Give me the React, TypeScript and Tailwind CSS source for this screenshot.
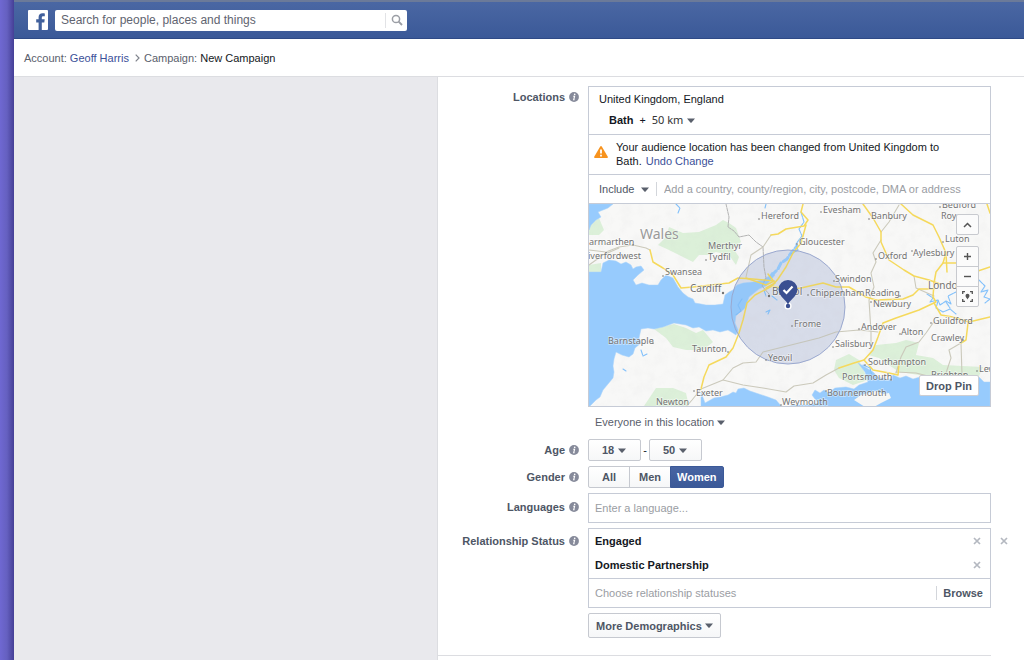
import { useState } from 'react';

interface MapLabel {
    name: string;
    x: number;
    y: number;
    size?: number;
    color?: string;
    dot?: [number, number];
}

const mapLabels: MapLabel[] = [
    { name: 'Wales', x: 52, y: 35, size: 14, color: '#999' },
    { name: 'Hereford', x: 173, y: 15, dot: [171, 15] },
    { name: 'Evesham', x: 235, y: 9, dot: [233, 8] },
    { name: 'Banbury', x: 283, y: 15, dot: [281, 15] },
    { name: 'Bedford', x: 354, y: 4, dot: [352, 3] },
    { name: 'Roy', x: 353, y: 15 },
    { name: 'Luton', x: 357, y: 38, dot: [355, 38] },
    { name: 'Gloucester', x: 211, y: 41, dot: [209, 40] },
    { name: 'Oxford', x: 290, y: 55, dot: [288, 55] },
    { name: 'Aylesbury', x: 325, y: 52, dot: [324, 47] },
    { name: 'armarthen', x: 1, y: 41, dot: [45, 41] },
    { name: 'iverfordwest', x: 0, y: 55 },
    { name: 'Merthyr', x: 120, y: 45 },
    { name: 'Tydfil', x: 120, y: 56, dot: [118, 56] },
    { name: 'Swansea', x: 77, y: 71, dot: [75, 72] },
    { name: 'Cardiff', x: 102, y: 88, size: 10, dot: [135, 89] },
    { name: 'Bristol', x: 184, y: 91, size: 10, dot: [181, 92] },
    { name: 'Swindon', x: 247, y: 78, dot: [246, 77] },
    { name: 'Chippenham', x: 222, y: 92, dot: [220, 91] },
    { name: 'Reading', x: 277, y: 92, dot: [312, 92] },
    { name: 'Newbury', x: 285, y: 103, dot: [283, 98] },
    { name: 'London', x: 340, y: 85, size: 10 },
    { name: 'Frome', x: 206, y: 123, dot: [204, 122] },
    { name: 'Andover', x: 273, y: 126, dot: [271, 125] },
    { name: 'Alton', x: 313, y: 131, dot: [312, 130] },
    { name: 'Guildford', x: 345, y: 120, dot: [343, 119] },
    { name: 'Crawley', x: 343, y: 137, dot: [375, 136] },
    { name: 'Salisbury', x: 247, y: 143, dot: [245, 143] },
    { name: 'Southampton', x: 280, y: 161, dot: [277, 161] },
    { name: 'Portsmouth', x: 254, y: 176, dot: [303, 176] },
    { name: 'Brighton', x: 343, y: 174 },
    { name: 'Bournemouth', x: 239, y: 192, dot: [238, 187] },
    { name: 'Weymouth', x: 194, y: 201, dot: [193, 201] },
    { name: 'Lewes', x: 391, y: 168, dot: [389, 167] },
    { name: 'Barnstaple', x: 20, y: 140, dot: [65, 139] },
    { name: 'Taunton', x: 104, y: 148, dot: [140, 148] },
    { name: 'Yeovil', x: 180, y: 157, dot: [178, 156] },
    { name: 'Exeter', x: 108, y: 192, dot: [106, 187] },
    { name: 'Newton', x: 68, y: 201 },
];

const majorRoads = [
    'M62 46L65 58L75 64L85 71L93 84L105 83L141 79L150 74L165 75L186 77',
    'M158 74L178 81L186 77M180 70L187 79L178 84',
    'M218 21L213 39L205 49L198 63L190 75L184 82L167 91L159 99L155 116L151 129L145 144L138 153L121 161L116 173L113 185',
    'M183 31L190 30L198 25L216 22L220 16L213 8L215 0',
    'M275 0L285 14L293 28L293 38L301 56L316 66L326 72L341 76L352 80',
    'M313 0L325 11L345 21L351 33L358 49L355 59L348 68L346 79',
    'M358 49L359 68M355 59L375 59L384 69L402 63',
    'M399 0L402 9',
    'M184 82L200 86L213 84L235 79L248 83L261 83L278 93L288 96L315 95L325 91L331 85L346 85',
    'M346 79L345 93L348 98L331 106L308 114L295 119L290 133L285 146L276 156L266 159L251 164',
    'M276 156L285 166L301 169L310 171M310 171L311 160',
    'M346 99L353 111L365 113L381 118L402 113',
    'M380 119L378 136L373 139',
];

const minorRoads = [
    'M1 46L18 48L31 43L45 41L58 44L62 46',
    'M1 61L15 51L31 44',
    'M158 73L163 51L175 43L183 31',
    'M311 1L301 18L293 28',
    'M293 36L285 49L288 58L283 69L286 83L281 96L283 128L283 140',
    'M113 185L135 176L145 164L155 159L168 158L175 148L191 144L215 138L231 134L248 128L271 126L290 128',
    'M135 176L155 181L175 184L198 188L206 182L225 179L238 171L251 164',
    'M345 119L338 129L331 138L318 143L313 153L308 169',
    'M373 139L361 146L363 154L358 169',
    'M373 139L374 171M308 168L328 169L348 174',
    'M113 185L104 196L98 203',
    'M326 72L328 84L346 92',
];

const rivers = [
    'M213 8L216 18L211 25L214 32L208 40L210 46L203 50',
    'M88 0L92 4L90 9M178 0L177 4',
    'M339 90L345 94L342 98L350 96L352 101L358 97L363 100L360 92L368 88L372 94L378 91',
    'M350 97L348 104L355 108L362 105L368 110M358 98L362 104',
    'M391 76L397 82L393 88L400 86L396 93L402 95L397 99',
    'M275 161L282 164L284 172M53 146L55 152L59 150',
    'M178 108L182 106L180 110M35 165L38 167',
    'M154 95L150 101L153 107L148 111M176 86L178 92M184 92L189 96',
];

function Caret() {
    return (
        <svg width="8" height="5" viewBox="0 0 8 5" className="pointer-events-none shrink-0 fill-[#5a606c]" aria-hidden="true">
            <path d="M0 0.5h8L4.6 4.4q-.6.6-1.2 0z" />
        </svg>
    );
}

function Cross() {
    return (
        <svg width="8" height="8" viewBox="0 0 8 8" className="stroke-[#b4b8c0]" aria-hidden="true">
            <path d="M1 1l6 6M7 1l-6 6" strokeWidth="1.7" />
        </svg>
    );
}

function InfoIcon() {
    return (
        <svg width="10" height="10" viewBox="0 0 10 10" className="shrink-0" aria-hidden="true">
            <circle cx="5" cy="5" r="4.9" fill="#868a9a" />
            <path d="M4.2 4.2h1.4L4.7 7.8h.9" fill="none" stroke="#fff" strokeWidth="1.1" />
            <circle cx="5.7" cy="2.4" r=".8" fill="#fff" />
        </svg>
    );
}

interface RowLabelProps {
    text: string;
    htmlFor?: string;
    className?: string;
}

function RowLabel({ text, htmlFor, className = '' }: RowLabelProps) {
    return (
        <div className={`flex w-[150px] shrink-0 items-start justify-end pr-[9px] ${className}`}>
            <label htmlFor={htmlFor} className="flex items-center gap-1 text-[11px] leading-[14px] font-bold text-[#4e5665]">
                {text}
                <InfoIcon />
            </label>
        </div>
    );
}

interface AgeSelectProps {
    id: string;
    label: string;
    value: number;
    onChange: (value: number) => void;
}

function AgeSelect({ id, label, value, onChange }: AgeSelectProps) {
    const ages = Array.from({ length: 53 }, (_, i) => i + 13);

    return (
        <div className="flex h-[22px] w-[53px] items-center rounded-xs border border-[#c6c9d0] bg-linear-to-b from-white to-[#f6f7f8] pl-[13px]">
            <select
                id={id}
                aria-label={label}
                value={value}
                onChange={(e) => onChange(Number(e.target.value))}
                className="w-4 appearance-none bg-transparent text-[11px] leading-[14px] font-bold text-[#4e5665] outline-none"
            >
                {ages.map((age) => <option key={age} value={age}>{age}</option>)}
            </select>
            <Caret />
        </div>
    );
}

function Header() {
    return (
        <header className="flex h-[39px] items-center gap-[7px] border-t-2 border-b border-t-[#6b7a99] border-b-[#2f4a86] bg-linear-to-b from-[#4a67a3] to-[#3b5998] pl-[14px]">
            <a href="#" aria-label="Home" className="block">
                <svg width="20" height="20" viewBox="0 0 20 20" aria-hidden="true">
                    <rect width="20" height="20" rx="1" fill="#fff" />
                    <path d="M10.6 20v-7.6H8.2V9.3h2.4V7.1c0-2.5 1.5-3.9 3.9-3.9 1 0 1.8.1 2.3.2v2.8h-1.5c-1.2 0-1.5.6-1.5 1.5v1.6h2.9l-.4 3.1h-2.5V20z" fill="#41609c" />
                </svg>
            </a>
            <form className="flex h-[21px] w-[352px] items-center rounded-xs bg-white" onSubmit={(e) => e.preventDefault()}>
                <input
                    type="text"
                    aria-label="Search"
                    placeholder="Search for people, places and things"
                    className="min-w-0 flex-1 px-1.5 text-[12px] leading-4 outline-none placeholder:text-[#5f6470]"
                />
                <button type="submit" aria-label="Search" className="flex h-[15px] w-[22px] items-center justify-center border-l border-[#e2e3e6]">
                    <svg width="12" height="12" viewBox="0 0 12 12" fill="none" stroke="#9b9ea5" aria-hidden="true">
                        <circle cx="5" cy="5" r="3.6" strokeWidth="1.5" />
                        <path d="M7.7 7.7L11 11" strokeWidth="1.9" />
                    </svg>
                </button>
            </form>
        </header>
    );
}

function Breadcrumb() {
    return (
        <nav className="flex h-[38px] items-center border-b border-[#dcdde1] pl-[10px] text-[11px] leading-[14px] text-[#5a606c]">
            <span>Account: <a href="#" className="text-[#3b4f98]">Geoff Harris</a></span>
            <svg width="5" height="8" viewBox="0 0 5 8" fill="none" stroke="#7f838c" strokeWidth="1.2" className="mr-1 ml-1.5" aria-hidden="true">
                <path d="M.7.7L4 4L.7 7.3" />
            </svg>
            <span>Campaign: <span className="text-[#141823]">New Campaign</span></span>
        </nav>
    );
}

const mapButton = 'flex h-[21px] w-[23px] items-center justify-center border border-[#c8cacf] bg-[#fbfbfb]';

function LocationMap() {
    return (
        <div className="relative h-[202px] overflow-hidden bg-[#f5f5f4]">
            <svg viewBox="1 0 401 202" preserveAspectRatio="xMidYMid slice" className="h-full w-full" role="img" aria-label="Map of the area within 50 km of Bath">
                <defs>
                    <filter id="relief" x="0" y="0" width="1" height="1">
                        <feTurbulence type="fractalNoise" baseFrequency="0.09" numOctaves="3" seed="4" />
                        <feColorMatrix values="0 0 0 0 .55  0 0 0 0 .55  0 0 0 0 .57  .9 0 0 0 -.36" />
                    </filter>
                </defs>
                <rect width="403" height="204" fill="#f8f8f7" />

                <g fill="#dcf0d9">
                    <path d="M70 41L78 33L81 23L95 29L111 28L128 21L135 16L141 19L148 24L153 38L145 44L151 53L148 61L141 51L128 48L120 51L111 51L105 58L95 53L81 46Z" />
                    <path d="M1 21L11 14L16 26L11 31L1 31ZM1 61L13 59L13 68L1 68Z" />
                    <path d="M66 125L86 120L98 124L108 129L115 126L125 138L115 146L98 146L85 143L78 134Z" />
                    <path d="M56 202L68 184L85 184L98 189L101 203Z" />
                    <path d="M248 156L261 150L271 156L280 176L265 181L251 174L246 166Z" />
                    <path d="M280 151L288 141L308 139L318 136L331 139L328 151L345 154L355 161L395 163L391 172L331 171L311 168L291 154Z" />
                </g>
                <circle cx="200" cy="103" r="57" fill="#dfe2ec" />
                <rect width="403" height="204" filter="url(#relief)" opacity=".2" />

                <g fill="#97cbfd" stroke="#a9d3fb" strokeWidth=".5" strokeLinejoin="round">
                    <path d="M1 0L25 0L20 4L10 8L13 13L8 16L3 21L1 26Z" />
                    <path d="M1 68L13 68L15 59L21 56L28 57L33 60L38 58L43 61L45 65L48 63L53 62L56 66L50 71L45 76L48 81L54 79L61 81L70 81L73 76L78 71L85 74L90 83L95 89L100 93L105 95L107 99L113 100L118 101L127 101L135 100L137 91L141 88L145 86L149 81L155 79L165 78L175 76L181 72L184 68L187 71L182 77L178 82L171 85L161 93L157 104L155 106L148 111L147 119L150 126L148 131L145 129L140 126L132 128L125 126L118 127L111 123L105 124L98 121L86 119L75 123L66 125L60 124L53 125L51 134L53 139L47 144L45 150L41 153L34 151L28 148L26 155L25 162L26 168L25 174L20 180L15 186L12 193L8 196L1 203Z" />
                    <path d="M113 203L113 188L117 199L126 194L132 193L140 191L145 188L148 189L150 185L156 184L162 187L168 189L180 193L188 196L194 203Z" />
                    <path d="M200 203L205 201L218 201L230 199L224 191L227 186L232 189L236 186L240 189L247 184L258 183L266 185L271 181L280 178L277 168L270 159L277 163L285 168L290 173L301 176L305 171L312 174L318 172L325 175L332 173L345 178L391 173L396 178L402 178L402 203Z" />
                </g>
                <path d="M266 196L273 191L280 189L288 187L295 190L301 189L303 194L293 199L286 203L277 203Z" fill="#f6f6f5" />

                <g fill="none" strokeLinejoin="round" strokeLinecap="round">
                    <path d="M184 71L190 65L193 59L199 55L203 49L209 42" stroke="#97cbfd" strokeWidth="3" strokeDasharray="6 3" />
                    {rivers.map((d) => <path key={d} d={d} stroke="#83c1fb" strokeWidth="1.1" strokeDasharray="5 1" />)}
                    <path d="M138 0L141 13L140 23L146 27L151 33L161 31L168 38L175 43L176 63L178 74L174 82L181 90" stroke="#b4b4b4" strokeDasharray="3 1" />
                    {minorRoads.map((d) => <path key={d} d={d} stroke="#cbc9bb" strokeWidth="1.1" />)}
                    {majorRoads.map((d) => <path key={d} d={d} stroke="#f5d95c" strokeWidth="1.5" />)}
                </g>
                <circle cx="200" cy="103" r="57" fill="#6d84b4" fillOpacity=".06" stroke="#9aa8cf" />

                <g fontFamily="'Noto Sans', sans-serif" stroke="#fff" strokeOpacity=".5" strokeWidth="1.5" paintOrder="stroke">
                    {mapLabels.map(({ name, x, y, size = 9, color = '#737373', dot }) => (
                        <g key={name} fill={color}>
                            <text x={x} y={y} fontSize={size}>{name}</text>
                            {dot && <circle cx={dot[0]} cy={dot[1]} r={size > 9 ? 1.2 : 0.8} stroke="none" />}
                        </g>
                    ))}
                </g>

                <circle cx="200" cy="102" r="3.6" fill="#fff" />
                <circle cx="200" cy="102" r="2.2" fill="#3a4f91" />
                <path d="M200 101c-1-5-9-8-9.500-15.500a9.500 9.500 0 0 1 19 0C209 93 201 96 200 101z" fill="#3a4f91" />
                <path d="M195.500 86l3 3l6-6.500" fill="none" stroke="#fff" strokeWidth="2.200" />
            </svg>

            <div className="absolute top-[10px] right-[11px] flex flex-col text-[#555]">
                <button type="button" aria-label="Collapse map" className={`${mapButton} mb-[11px] rounded-xs`}>
                    <svg width="9" height="6" viewBox="0 0 9 6" fill="none" stroke="currentColor" strokeWidth="1.5"><path d="M1 5l3.500-3.500L8 5" /></svg>
                </button>
                <button type="button" aria-label="Zoom in" className={`${mapButton} rounded-t-xs`}>
                    <svg width="7" height="7" viewBox="0 0 7 7" stroke="currentColor" strokeWidth="1.4"><path d="M0 3.500h7M3.500 0v7" /></svg>
                </button>
                <button type="button" aria-label="Zoom out" className={`${mapButton} -mt-px`}>
                    <svg width="7" height="7" viewBox="0 0 7 7" stroke="currentColor" strokeWidth="1.4"><path d="M0 3.500h7" /></svg>
                </button>
                <button type="button" aria-label="Centre on pin" className={`${mapButton} -mt-px rounded-b-xs`}>
                    <svg width="11" height="11" viewBox="0 0 11 11" fill="none" stroke="currentColor" strokeWidth="1.3">
                        <path d="M.7 3V.7H3M8 .7h2.300V3M10.300 8v2.300H8M3 10.300H.7V8" />
                        <path d="M5.500 8.500C5 7 3.500 6.300 3.500 4.700a2 2 0 0 1 4 0C7.500 6.300 6 7 5.500 8.500z" fill="currentColor" stroke="none" />
                    </svg>
                </button>
            </div>
            <button type="button" className="absolute right-[11px] bottom-[10px] h-[21px] w-[60px] rounded-xs border border-[#cdced3] bg-white text-[11px] leading-[14px] font-bold text-[#4e5665]">
                Drop Pin
            </button>
        </div>
    );
}

function Locations() {
    return (
        <div className="min-w-0 flex-1">
            <div className="divide-y divide-[#c6cbd6] border border-[#c6cbd6]">
                <div className="flex h-12 flex-col gap-[7px] pt-[5px] pl-[10px] text-[11px] leading-[14px] text-[#141823]">
                    <div>United Kingdom, England</div>
                    <div className="flex items-center pl-[10px]">
                        <span className="font-bold">Bath</span>
                        <label htmlFor="radius" className="mr-1.5 ml-1.5 font-['Noto_Sans',sans-serif]">+</label>
                        <select id="radius" defaultValue="50" className="w-[35px] appearance-none font-['Noto_Sans',sans-serif] text-[#333] outline-none">
                            <option value="25">25 km</option>
                            <option value="50">50 km</option>
                            <option value="80">80 km</option>
                        </select>
                        <Caret />
                    </div>
                </div>
                <div className="flex h-10 gap-2 pt-[5px] pl-[5px] text-[11px] leading-[14px] text-[#141823]">
                    <svg width="14" height="12" viewBox="0 0 14 12" className="mt-[6px] shrink-0" aria-hidden="true">
                        <path d="M6.200.6q.8-1 1.600 0l6 10.200q.4 1.100-.8 1.200H1q-1.200-.1-.8-1.200z" fill="#f7931e" />
                        <path d="M7 3.500v4" stroke="#fff" strokeWidth="1.8" />
                        <path d="M7 8.800v1.700" stroke="#fff" strokeWidth="1.8" />
                    </svg>
                    <p className="max-w-[335px]">
                        Your audience location has been changed from United Kingdom to Bath.{' '}
                        <a href="#" className="ml-px text-[#3b4f98]">Undo Change</a>
                    </p>
                </div>
                <div className="flex h-[29px] items-center pl-[10px] text-[11px] leading-[14px]">
                    <select aria-label="Include or exclude" className="w-[42px] appearance-none text-[#4e5665] outline-none">
                        <option>Include</option>
                        <option>Exclude</option>
                    </select>
                    <Caret />
                    <input
                        id="locations"
                        type="text"
                        placeholder="Add a country, county/region, city, postcode, DMA or address"
                        className="ml-[7px] min-w-0 flex-1 border-l border-[#d3d6db] pl-[7px] outline-none placeholder:text-[#9a9da3]"
                    />
                </div>
                <LocationMap />
            </div>
            <div className="mt-2 flex items-center pl-[7px] text-[11px] leading-[14px] text-[#5a606c]">
                <select aria-label="Who in this location" className="w-[122px] appearance-none outline-none">
                    <option>Everyone in this location</option>
                    <option>People who live here</option>
                </select>
                <Caret />
            </div>
        </div>
    );
}

export default function App() {
    const [minAge, setMinAge] = useState(18);
    const [maxAge, setMaxAge] = useState(50);
    const [gender, setGender] = useState('Women');
    const [statuses, setStatuses] = useState(['Engaged', 'Domestic Partnership']);

    const removeStatus = (status: string) => {
        setStatuses(statuses.filter((s) => s !== status));
    };

    return (
        <div className="flex min-h-screen bg-white font-['Liberation_Sans',Arial,sans-serif]">
            <div className="w-[14px] shrink-0 bg-linear-to-r from-[#6f68d2] via-[#6560c0] to-[#453f96]" />
            <div className="flex min-w-0 flex-1 flex-col">
                <Header />
                <Breadcrumb />
                <div className="flex flex-1">
                    <aside className="w-[424px] shrink-0 border-r border-[#dcdde1] bg-[#e9e9ed]" />
                    <main className="min-w-0 flex-1 pt-[9px]">
                        <div className="flex pr-[33px]">
                            <RowLabel text="Locations" htmlFor="locations" className="pt-1" />
                            <Locations />
                        </div>

                        <div className="mt-[10px] flex items-center">
                            <RowLabel text="Age" htmlFor="min-age" />
                            <AgeSelect id="min-age" label="Minimum age" value={minAge} onChange={setMinAge} />
                            <span className="w-2 text-center text-[11px] leading-[14px] text-[#141823]">-</span>
                            <AgeSelect id="max-age" label="Maximum age" value={maxAge} onChange={setMaxAge} />
                        </div>

                        <div className="mt-[5px] flex items-center">
                            <RowLabel text="Gender" htmlFor="gender-All" />
                            <div role="radiogroup" aria-label="Gender" className="flex">
                                {['All', 'Men', 'Women'].map((option) => (
                                    <label
                                        key={option}
                                        className="relative -mr-px flex h-[22px] min-w-[42px] items-center justify-center border border-[#c6c9d0] bg-linear-to-b from-white to-[#f6f7f8] px-1.5 text-[11px] leading-[14px] font-bold text-[#4e5665] first:rounded-l-xs last:mr-0 last:rounded-r-xs has-checked:border-[#3b5998] has-checked:from-[#4864a2] has-checked:to-[#3b5998] has-checked:text-white"
                                    >
                                        <input
                                            type="radio"
                                            id={`gender-${option}`}
                                            name="gender"
                                            className="sr-only"
                                            checked={gender === option}
                                            onChange={() => setGender(option)}
                                        />
                                        {option}
                                    </label>
                                ))}
                            </div>
                        </div>

                        <div className="mt-[5px] flex pr-[33px]">
                            <RowLabel text="Languages" htmlFor="languages" className="pt-[7px]" />
                            <input
                                id="languages"
                                type="text"
                                placeholder="Enter a language..."
                                className="h-[30px] min-w-0 flex-1 border border-[#c6cbd6] px-1.5 text-[11px] leading-[14px] outline-none placeholder:text-[#9a9da3]"
                            />
                        </div>

                        <div className="mt-[5px] flex">
                            <RowLabel text="Relationship Status" htmlFor="statuses" className="pt-1.5" />
                            <div className="min-w-0 flex-1 border border-[#c6cbd6] text-[11px] leading-[14px]">
                                <ul className="border-b border-[#c6cbd6] pb-px font-bold text-[#141823]">
                                    {statuses.map((status) => (
                                        <li key={status} className="flex h-6 items-center justify-between pr-[9px] pl-1.5">
                                            {status}
                                            <button type="button" aria-label={`Remove ${status}`} onClick={() => removeStatus(status)}>
                                                <Cross />
                                            </button>
                                        </li>
                                    ))}
                                </ul>
                                <div className="flex h-7 items-center pr-[7px] pl-1.5">
                                    <input
                                        id="statuses"
                                        type="text"
                                        placeholder="Choose relationship statuses"
                                        className="min-w-0 flex-1 outline-none placeholder:text-[#9a9da3]"
                                    />
                                    <button type="button" className="border-l border-[#d3d6db] pl-1.5 font-bold text-[#4e5665]">Browse</button>
                                </div>
                            </div>
                            <button
                                type="button"
                                aria-label="Remove relationship status"
                                className="flex h-[26px] w-[33px] items-center pl-[9px]"
                                onClick={() => setStatuses([])}
                            >
                                <Cross />
                            </button>
                        </div>

                        <div className="mt-[5px] pl-[150px]">
                            <button type="button" className="flex h-[25px] items-center gap-[3px] rounded-xs border border-[#c6c9d0] bg-linear-to-b from-white to-[#f6f7f8] px-[7px] text-[11px] leading-[14px] font-bold text-[#4e5665]">
                                More Demographics
                                <Caret />
                            </button>
                        </div>
                        <div className="mt-[17px] mr-[33px] border-b border-[#dcdde1]" />
                    </main>
                </div>
            </div>
        </div>
    );
}
